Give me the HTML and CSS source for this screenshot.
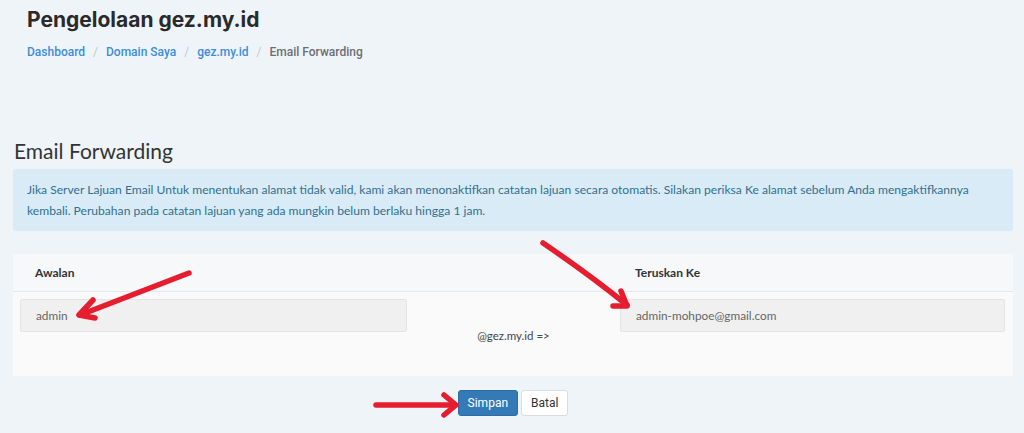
FILE: index.html
```html
<!DOCTYPE html>
<html lang="id">
<head>
  <meta charset="UTF-8" />
  <meta name="viewport" content="width=device-width, initial-scale=1" />
  <title>Pengelolaan gez.my.id</title>
  <link rel="stylesheet" href="styles.css">
</head>
<body>
  <header class="page-header">
    <h1>Pengelolaan gez.my.id</h1>
    <nav class="breadcrumb">
      <a href="#">Dashboard</a>
      <span class="sep">/</span>
      <a href="#">Domain Saya</a>
      <span class="sep">/</span>
      <a href="#">gez.my.id</a>
      <span class="sep">/</span>
      <span class="current">Email Forwarding</span>
    </nav>
  </header>

  <main class="content">
    <h3>Email Forwarding</h3>
    <div class="alert-info">
      Jika Server Lajuan Email Untuk menentukan alamat tidak valid, kami akan menonaktifkan catatan lajuan secara otomatis. Silakan periksa Ke alamat sebelum Anda mengaktifkannya kembali. Perubahan pada catatan lajuan yang ada mungkin belum berlaku hingga 1 jam.
    </div>

    <div class="forward-panel">
      <div class="forward-head">
        <div class="label">Awalan</div>
        <div></div>
        <div class="label">Teruskan Ke</div>
      </div>
      <div class="forward-row">
        <input class="field" type="text" value="admin" readonly>
        <div class="domain">@gez.my.id =&gt;</div>
        <input class="field" type="text" value="admin-mohpoe@gmail.com" readonly>
      </div>
    </div>

    <div class="actions">
      <button class="btn btn-primary">Simpan</button>
      <button class="btn btn-default">Batal</button>
    </div>
  </main>

  <!-- coretan panah merah di atas tangkapan layar -->
  <svg class="annotations" width="1024" height="433" viewBox="0 0 1024 433">
    <g fill="none" stroke="#e51d2e" stroke-width="5.5" stroke-linecap="round" stroke-linejoin="round">
      <path d="M189 273 L80 315" />
      <path d="M93 300 L79 315 L95 318" />
      <path d="M543 243 Q590 275 627 305" />
      <path d="M621 291 L627 306 L613 306" />
      <path d="M376 405 L455 405" />
      <path d="M444 395 L456 405 L444 415" />
    </g>
  </svg>
</body>
</html>
```

FILE: styles.css
```css
body {
  margin: 0;
  padding: 0;
  font-family: 'Lato', 'Open Sans', sans-serif;
  background: #eff4f8;
  color: #333;
  position: relative;
  height: 433px;
  overflow: hidden;
}

.page-header {
  padding: 5px 27px 0 27px;
}

h1 {
  margin: 0;
  font-family: 'Inter', 'Roboto', sans-serif;
  font-weight: 700;
  font-size: 21px;
  line-height: 30px;
  color: #2a2a2a;
}

.breadcrumb {
  margin-top: 10px;
  font-family: 'Roboto', sans-serif;
  font-weight: 500;
  font-size: 12px;
  display: flex;
  gap: 8px;
}

.breadcrumb a {
  color: #3b8ede;
  text-decoration: none;
}

.breadcrumb .sep {
  color: #c4c8cc;
  font-weight: 400;
}

.breadcrumb .current {
  color: #6b6f73;
}

.content {
  padding: 0 11px 0 13px;
}

h3 {
  margin: 77px 0 0 1px;
  font-weight: 400;
  font-size: 21px;
  line-height: 30px;
  color: #333;
}

.alert-info {
  margin-top: 3px;
  background: #d9ebf6;
  color: #31708f;
  font-size: 12.1px;
  line-height: 21px;
  padding: 10px 18px 10px 14px;
  border-radius: 2px;
}

.forward-panel {
  margin-top: 23px;
  background: #f8f9fa;
  border-radius: 2px;
}

.forward-head,
.forward-row {
  display: grid;
  grid-template-columns: 387px 213px 1fr;
  padding: 0 8px 0 7px;
}

.forward-head {
  height: 37px;
  align-items: center;
  border-bottom: 1px solid #e4e8eb;
  background: #f6f8fa;
}

.forward-head .label {
  padding-left: 15px;
  font-weight: 700;
  font-size: 12px;
  color: #333;
}

.forward-row {
  height: 77px;
  padding-top: 7px;
  align-items: start;
  background: #fafafa;
}

.field {
  box-sizing: border-box;
  height: 33px;
  width: 100%;
  margin: 0;
  padding: 0 15px;
  font-family: 'Lato', sans-serif;
  font-size: 11.8px;
  color: #666;
  background: #f0f0f0;
  border: 1px solid #e4e4e4;
  border-radius: 2px;
  outline: none;
}

.domain {
  align-self: center;
  text-align: center;
  font-size: 11.5px;
  color: #444;
  margin-top: -4px;
}

.actions {
  display: flex;
  justify-content: center;
  gap: 3px;
  margin-top: 14px;
}

.btn {
  height: 26px;
  padding: 0 9px;
  font-family: 'Roboto', sans-serif;
  font-size: 12px;
  border-radius: 3px;
  border: 1px solid transparent;
  cursor: pointer;
}

.btn-primary {
  background: #337ab7;
  border-color: #2e6da4;
  color: #fff;
}

.btn-default {
  background: #fff;
  border-color: #dcdcdc;
  color: #333;
}

.annotations {
  position: absolute;
  top: 0;
  left: 0;
  pointer-events: none;
}
```
